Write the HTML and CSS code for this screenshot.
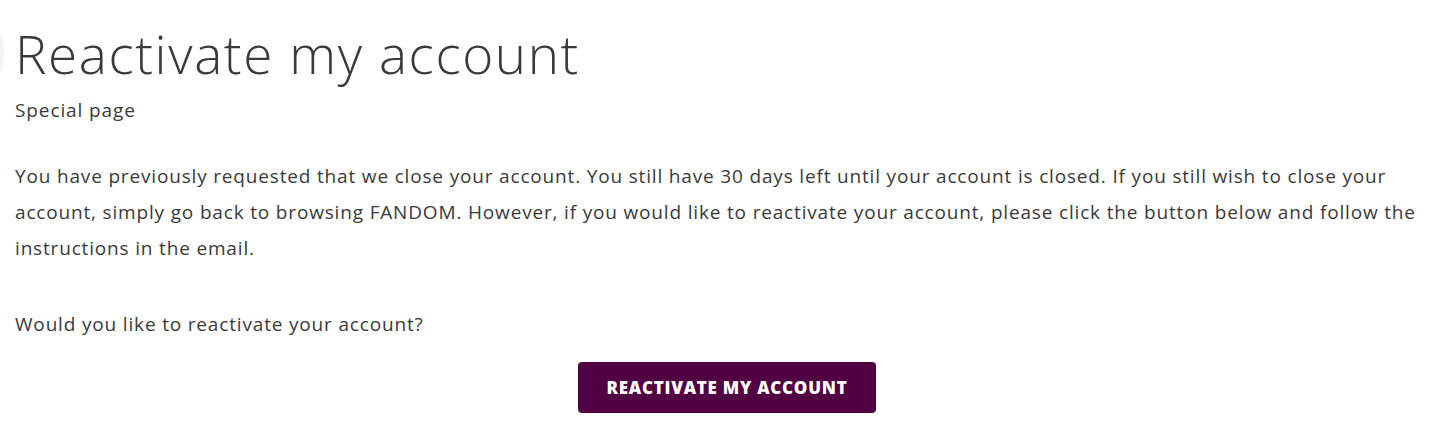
FILE: index.html
```html
<!DOCTYPE html>
<html lang="en">
<head>
<meta charset="utf-8">
<title>Reactivate my account</title>
<link rel="stylesheet" href="styles.css">
</head>
<body>
<div class="edge"></div>
<main class="page">
  <header class="page-header">
    <h1 class="page-title">Reactivate my account</h1>
    <div class="page-subtitle">Special page</div>
  </header>
  <div class="page-content">
    <p class="text">You have previously requested that we close your account. You still have 30 days left until your account is closed. If you still wish to close your account, simply go back to browsing FANDOM. However, if you would like to reactivate your account, please click the button below and follow the instructions in the email.</p>
    <p class="text question">Would you like to reactivate your account?</p>
    <div class="actions">
      <button class="btn-primary" type="button">Reactivate my account</button>
    </div>
  </div>
</main>
</body>
</html>
```

FILE: styles.css
```css
html, body {
  margin: 0;
  padding: 0;
  background: #ffffff;
}
body {
  font-family: "Open Sans", "Noto Sans", sans-serif;
  color: #3a3a3a;
  position: relative;
  overflow: hidden;
}
.edge {
  position: absolute;
  left: -14px;
  top: 28px;
  width: 18px;
  height: 50px;
  border-radius: 50%;
  background: #f4f4f4;
}
.page {
  padding: 22px 11px 0 15px;
}
.page-title {
  margin: 0;
  font-size: 53px;
  font-weight: 300;
  line-height: 64px;
  letter-spacing: 1.6px;
  color: #3a3a3a;
}
.page-subtitle {
  font-size: 19px;
  line-height: 24px;
  letter-spacing: 0.9px;
  margin-top: 12px;
}
.page-content {
  margin-top: 36px;
}
.text {
  margin: 0;
  font-size: 19px;
  line-height: 36px;
  letter-spacing: 0.83px;
}
.question {
  margin-top: 40px;
}
.actions {
  display: flex;
  justify-content: center;
  margin-top: 20px;
}
.btn-primary {
  width: 298px;
  height: 51px;
  border: 0;
  border-radius: 4px;
  background: #520044;
  color: #ffffff;
  font-family: inherit;
  font-size: 17px;
  font-weight: 800;
  text-transform: uppercase;
  letter-spacing: 0.75px;
  cursor: pointer;
}
```
